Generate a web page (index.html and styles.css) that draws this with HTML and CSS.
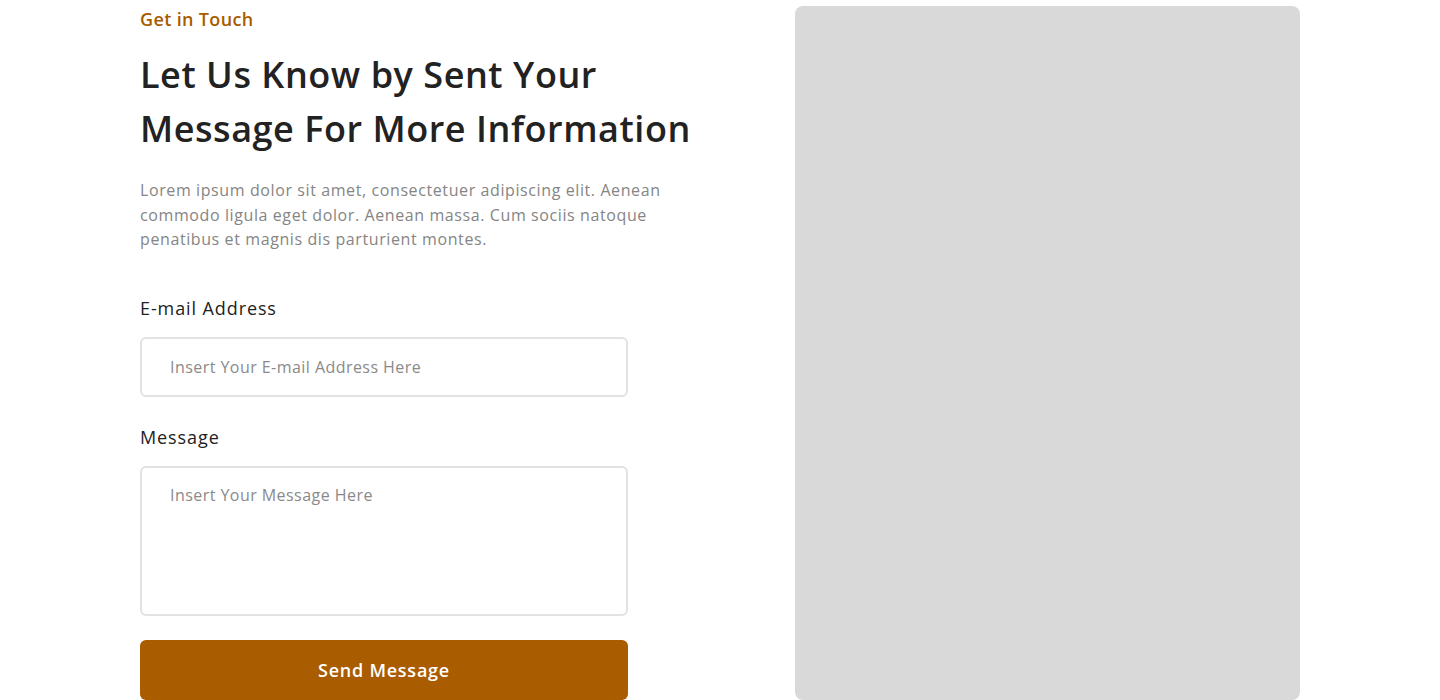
FILE: index.html
```html
<!DOCTYPE html>
<html lang="en">
<head>
<meta charset="utf-8">
<title>Get in Touch</title>
<link rel="stylesheet" href="styles.css">
</head>
<body>
<section class="contact">
  <div class="contact-left">
    <p class="tagline">Get in Touch</p>
    <h1 class="title">Let Us Know by Sent Your Message For More Information</h1>
    <p class="intro">Lorem ipsum dolor sit amet, consectetuer adipiscing elit. Aenean commodo ligula eget dolor. Aenean massa. Cum sociis natoque penatibus et magnis dis parturient montes.</p>
    <form class="form">
      <label class="label" for="email">E-mail Address</label>
      <input class="field" id="email" type="email" placeholder="Insert Your E-mail Address Here">
      <label class="label label-msg" for="msg">Message</label>
      <textarea class="field area" id="msg" placeholder="Insert Your Message Here"></textarea>
      <button class="send" type="button">Send Message</button>
    </form>
  </div>
  <div class="contact-right"></div>
</section>
</body>
</html>
```

FILE: styles.css
```css
* { box-sizing: border-box; }
html, body { margin: 0; padding: 0; background: #fff; }
body {
  font-family: "Open Sans", "Noto Sans", sans-serif;
  color: #222;
  overflow: hidden;
}
.contact {
  display: flex;
  justify-content: space-between;
  width: 1160px;
  margin: 0 auto;
  padding-top: 6px;
  height: 700px;
}
.contact-left {
  width: 580px;
  display: flex;
  flex-direction: column;
}
.tagline {
  margin: 0;
  font-size: 18px;
  line-height: 27px;
  font-weight: 600;
  color: #a85c00;
  letter-spacing: 0.35px;
}
.title {
  margin: 15px 0 0;
  font-size: 36px;
  line-height: 54px;
  font-weight: 600;
  color: #222;
  letter-spacing: 0.55px;
}
.intro {
  margin: 22px 0 0;
  font-size: 16px;
  line-height: 24.5px;
  color: #858585;
  width: 540px;
  letter-spacing: 0.6px;
}
.form {
  display: flex;
  flex-direction: column;
  width: 488px;
  margin-top: 43px;
}
.label {
  font-size: 18px;
  line-height: 27px;
  font-weight: 500;
  color: #222;
  letter-spacing: 0.9px;
}
.label-msg { margin-top: 27px; }
.field {
  margin-top: 15px;
  width: 488px;
  height: 60px;
  border: 2px solid #e2e2e2;
  border-radius: 6px;
  padding: 0 28px;
  font-family: inherit;
  font-size: 16px;
  letter-spacing: 0.45px;
  color: #222;
  outline: none;
  background: #fff;
}
.field::placeholder { color: #8a8a8a; }
.area {
  height: 150px;
  padding-top: 15px;
  resize: none;
  line-height: 24px;
}
.send {
  margin-top: 24px;
  height: 60px;
  border: 0;
  border-radius: 6px;
  background: #a95c00;
  color: #fff;
  font-family: inherit;
  font-size: 18px;
  font-weight: 600;
  letter-spacing: 0.75px;
  cursor: pointer;
}
.contact-right {
  width: 505px;
  height: 694px;
  background: #d9d9d9;
  border-radius: 8px;
}
```
